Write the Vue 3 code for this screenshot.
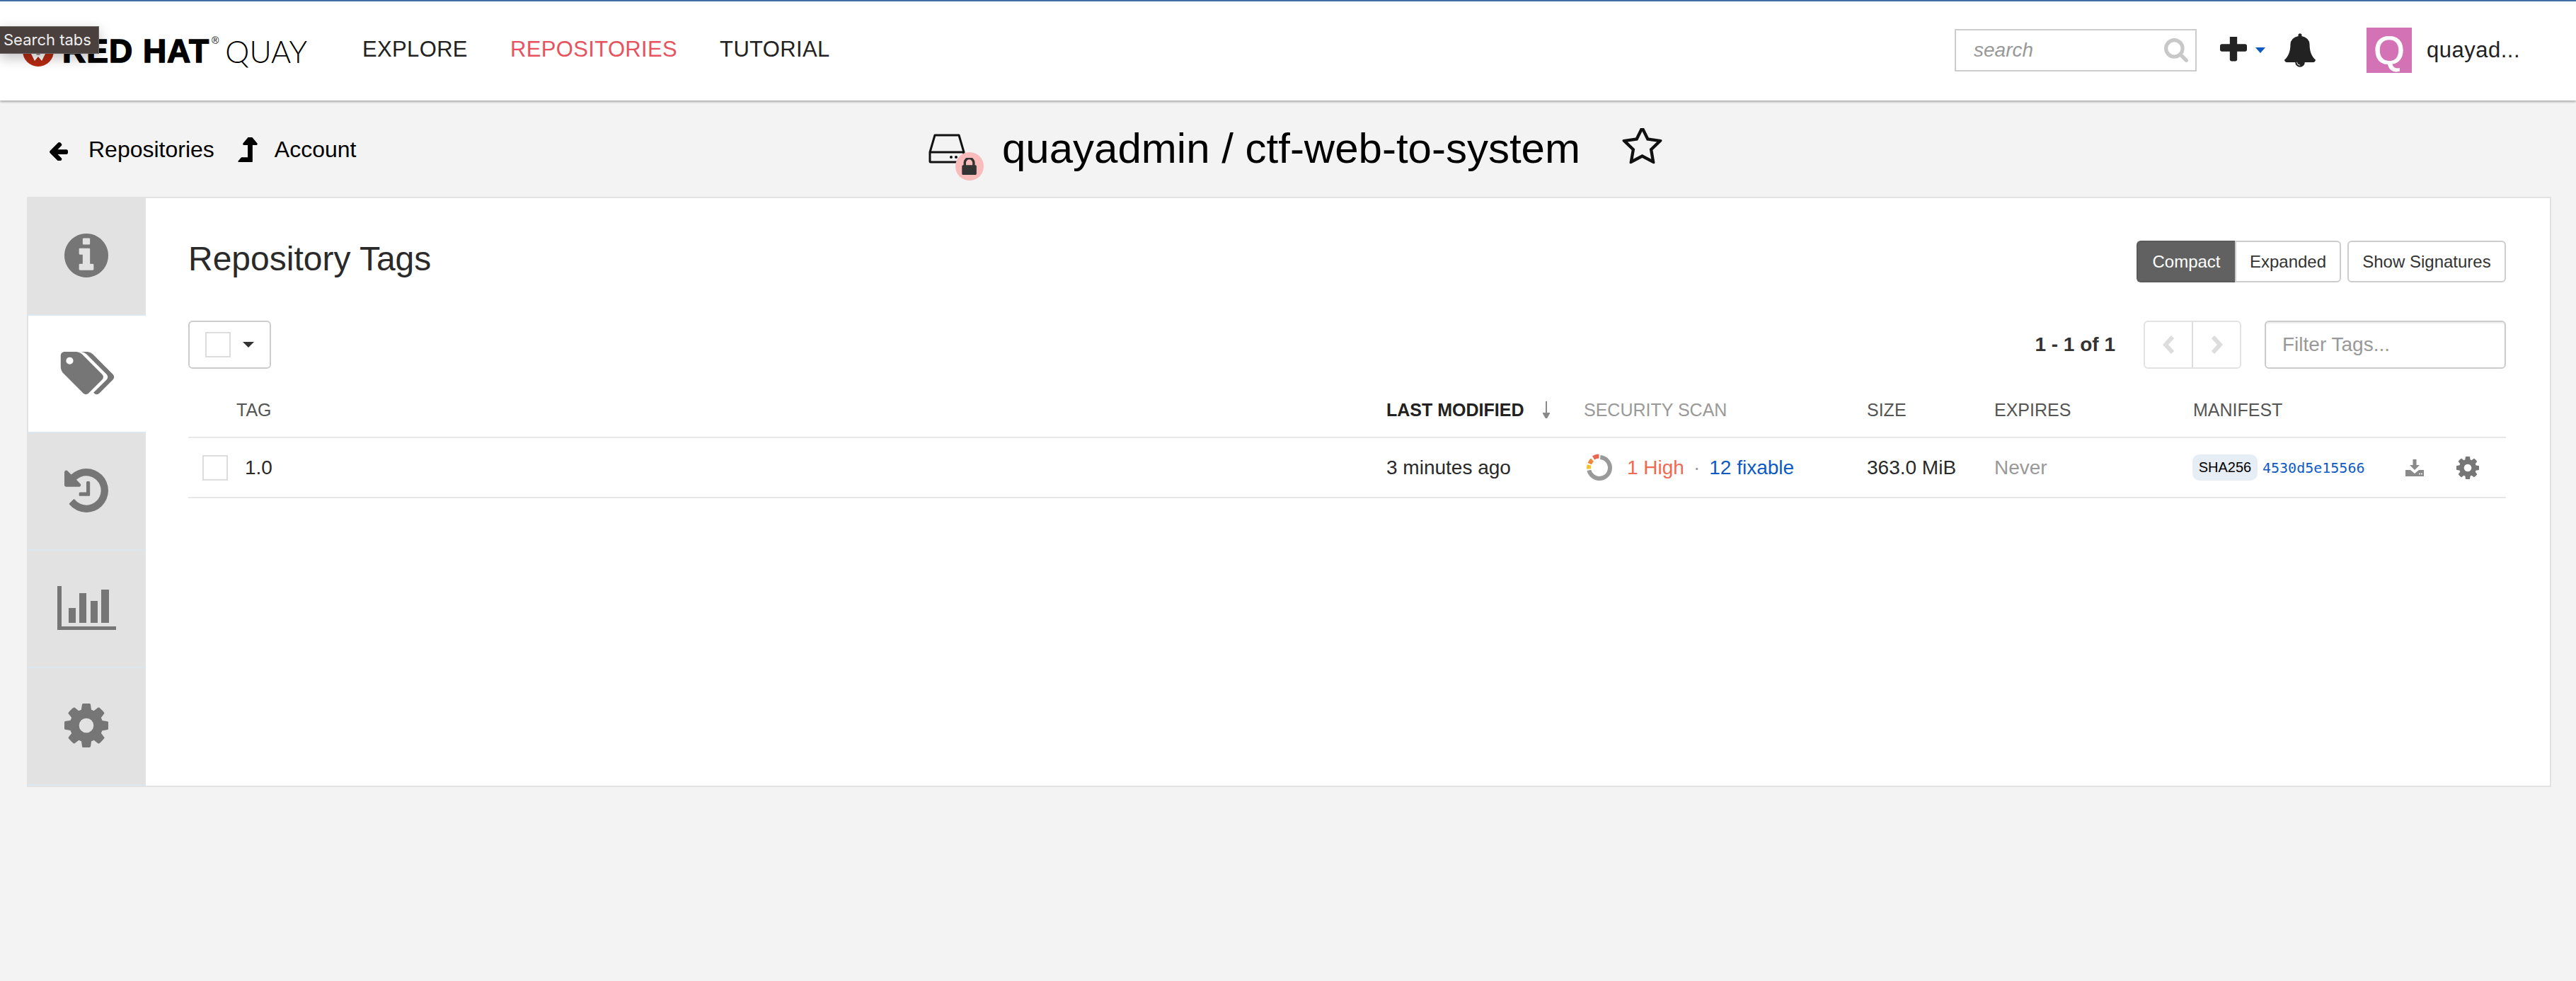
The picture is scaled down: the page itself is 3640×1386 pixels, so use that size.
<script setup>
const navItems = [
  { label: 'EXPLORE', active: false },
  { label: 'REPOSITORIES', active: true },
  { label: 'TUTORIAL', active: false },
]

const gearPath = 'M1152 896q0-106-75-181t-181-75-181 75-75 181 75 181 181 75 181-75 75-181zm512-109v222q0 12-8 23t-20 13l-185 28q-19 54-39 91 35 50 107 138 10 12 10 25t-9 23q-27 37-99 108t-94 71q-12 0-26-9l-138-108q-44 23-91 38-16 136-29 186-7 28-36 28h-222q-14 0-24.5-8.5t-11.5-21.5l-28-184q-49-16-90-37l-141 107q-10 9-25 9-14 0-25-11-126-114-165-168-7-10-7-23 0-12 8-23 15-21 51-66.5t54-70.5q-27-50-41-99l-183-27q-13-2-21-12.5t-8-23.5v-222q0-12 8-23t19-13l186-28q14-46 39-92-40-57-107-138-10-12-10-24 0-10 9-23 26-36 98.5-107.5t94.5-71.5q13 0 26 10l138 107q44-23 91-38 16-136 29-186 7-28 36-28h222q14 0 24.5 8.5t11.5 21.5l28 184q49 16 90 37l142-107q9-9 24-9 13 0 25 10 129 119 165 170 7 8 7 22 0 12-8 23-15 21-51 66.5t-54 70.5q26 50 41 98l183 28q13 2 21 12.5t8 23.5z'

// donut pieces of the scan summary, in percent of the ring
const scanSegments = [
  { color: '#9a9a9a', r: 15, len: 70, start: 0 },
  { color: '#f4c430', r: 15, len: 6, start: 72 },
  { color: '#ee8a3c', r: 15, len: 7, start: 80 },
  { color: '#e8674f', r: 16.5, len: 8, start: 90 },
]
</script>

<template>
  <div class="page">
    <header class="topbar">
      <div class="tooltip">Search tabs</div>
      <div class="logo">
        <svg class="logo-mark" viewBox="0 0 44 44">
          <circle cx="22" cy="22" r="22" fill="#b42a12" />
          <path d="M10 22 L34 22 L27 36 L22 30 L17 36 Z" fill="#fff" />
          <path d="M17 22 L27 22 L24 28 L20 28 Z" fill="#999" />
        </svg>
        <span class="logo-bold">RED HAT</span><span class="logo-reg">®</span>
        <span class="logo-light">QUAY</span>
      </div>
      <nav class="nav">
        <a v-for="item in navItems" :key="item.label" class="nav-link" :class="{ active: item.active }">{{ item.label }}</a>
      </nav>
      <div class="topbar-right">
        <div class="search">
          <span class="search-text">search</span>
          <svg class="search-icon" viewBox="64 128 1664 1664"><path fill="#c8c8c8" d="M1216 832q0-185-131.5-316.5t-316.5-131.5-316.5 131.5-131.5 316.5 131.5 316.5 316.5 131.5 316.5-131.5 131.5-316.5zm512 832q0 52-38 90t-90 38q-54 0-90-38l-343-342q-179 124-399 124-143 0-273.5-55.5t-225-150-150-225-55.5-273.5 55.5-273.5 150-225 225-150 273.5-55.5 273.5 55.5 225 150 150 225 55.5 273.5q0 220-124 399l343 343q37 37 37 90z" /></svg>
        </div>
        <svg class="plus" viewBox="192 256 1408 1408"><path fill="#222" d="M1600 736v192q0 40-28 68t-68 28h-416v416q0 40-28 68t-68 28h-192q-40 0-68-28t-28-68v-416h-416q-40 0-68-28t-28-68v-192q0-40 28-68t68-28h416v-416q0-40 28-68t68-28h192q40 0 68 28t28 68v416h416q40 0 68 28t28 68z" /></svg>
        <span class="plus-caret"></span>
        <svg class="bell" viewBox="64 0 1664 1792"><path fill="#222" d="M912 1696q0-16-16-16-59 0-101.5-42.5t-42.5-101.5q0-16-16-16t-16 16q0 73 51.5 124.5t124.5 51.5q16 0 16-16zm816-288q0 52-38 90t-90 38h-448q0 106-75 181t-181 75-181-75-75-181h-448q-52 0-90-38t-38-90q50-42 91-88t85-119.5 74.5-158.5 50-206 19.5-260q0-152 117-282.5t307-158.5q-8-19-8-39 0-40 28-68t68-28 68 28 28 68q0 20-8 39 190 28 307 158.5t117 282.5q0 139 19.5 260t50 206 74.5 158.5 85 119.5 91 88z" /></svg>
        <div class="avatar">Q</div>
        <span class="username">quayad...</span>
      </div>
    </header>

    <div class="repo-head">
      <div class="crumbs">
        <a class="crumb">
          <svg class="crumb-back" viewBox="128 128 1536 1536"><path d="M1664 896v128q0 53-32.5 90.5t-84.5 37.5h-704l293 294q38 36 38 90t-38 90l-75 76q-37 37-90 37-52 0-91-37l-651-652q-37-37-37-90 0-52 37-91l651-650q38-38 91-38 52 0 90 38l75 74q38 38 38 91t-38 91l-293 293h704q52 0 84.5 37.5t32.5 90.5z" /></svg>
          Repositories
        </a>
        <a class="crumb">
          <svg class="crumb-up" viewBox="370 128 1035 1312"><path d="M1395 508q-18 36-58 36h-192v864q0 14-9 23t-23 9h-704q-21 0-29-18-8-20 4-35l160-192q9-11 25-11h320v-640h-192q-40 0-58-36-17-37 9-68l320-384q18-22 49-22t49 22l320 384q27 32 9 68z" /></svg>
          Account
        </a>
      </div>
      <div class="repo-title">
        <div class="repo-icon">
          <svg class="drive" viewBox="0 0 52 42">
            <path d="M9 2 H43 L50 26 V39 a1 1 0 0 1 -1 1 H3 a1 1 0 0 1 -1 -1 V26 Z M2 26 H50" fill="none" stroke="#111" stroke-width="3" stroke-linejoin="round" />
            <circle cx="32" cy="33" r="2" fill="#111" />
            <circle cx="39" cy="33" r="2" fill="#111" />
          </svg>
          <span class="lock-badge">
            <svg class="lock" viewBox="192 128 1216 1344"><path fill="#333" d="M520 704h512v-192q0-106-75-181t-181-75-181 75-75 181v192zm832 96v576q0 40-28 68t-68 28h-960q-40 0-68-28t-28-68v-576q0-40 28-68t68-28h32v-192q0-184 132-316t316-132 316 132 132 316v192h32q40 0 68 28t28 68z" /></svg>
          </span>
        </div>
        <h1 class="repo-name">quayadmin / ctf-web-to-system</h1>
        <svg class="star" viewBox="64 128 1664 1600"><path fill="#111" d="M1201 1004l306-297-422-62-189-382-189 382-422 62 306 297-73 421 378-199 377 199zm527-357q0 22-26 48l-363 354 86 500q1 7 1 20 0 50-41 50-19 0-40-12l-449-236-449 236q-22 12-40 12-21 0-31.5-14.5t-10.5-35.5q0-6 2-20l86-500-364-354q-25-27-25-48 0-37 56-46l502-73 225-455q19-41 49-41t49 41l225 455 502 73q56 9 56 46z" /></svg>
      </div>
    </div>

    <main class="card">
      <aside class="rail">
        <div class="rail-tab">
          <svg class="rail-info" viewBox="128 128 1536 1536"><path d="M1152 1376v-160q0-14-9-23t-23-9h-96v-512q0-14-9-23t-23-9h-320q-14 0-23 9t-9 23v160q0 14 9 23t23 9h96v320h-96q-14 0-23 9t-9 23v160q0 14 9 23t23 9h448q14 0 23-9t9-23zm-128-896v-160q0-14-9-23t-23-9h-192q-14 0-23 9t-9 23v160q0 14 9 23t23 9h192q14 0 23-9t9-23zm640 416q0 209-103 385.5t-279.5 279.5-385.5 103-385.5-103-279.5-279.5-103-385.5 103-385.5 279.5-279.5 385.5-103 385.5 103 279.5 279.5 103 385.5z" /></svg>
        </div>
        <div class="rail-tab active">
          <svg class="rail-tags" viewBox="0 128 1900 1536"><path d="M448 448q0-53-37.5-90.5t-90.5-37.5-90.5 37.5-37.5 90.5 37.5 90.5 90.5 37.5 90.5-37.5 37.5-90.5zm1067 576q0 53-37 90l-491 492q-39 37-91 37-53 0-90-37l-715-716q-38-37-64.5-101t-26.5-117v-416q0-52 38-90t90-38h416q53 0 117 26.5t102 64.5l715 714q37 39 37 91zm384 0q0 53-37 90l-491 492q-39 37-91 37-36 0-59-14t-53-45l470-470q37-37 37-90 0-52-37-91l-715-714q-38-38-102-64.5t-117-26.5h224q53 0 117 26.5t102 64.5l715 714q37 39 37 91z" /></svg>
        </div>
        <div class="rail-tab">
          <svg class="rail-info" viewBox="128 128 1536 1536"><path d="M1664 896q0 156-61 298t-164 245-245 164-298 61q-172 0-327-72.5t-264-204.5q-7-10-6.5-22.5t8.5-20.5l137-138q10-9 25-9 16 2 23 12 73 95 179 147t225 52q104 0 198.5-40.5t163.5-109.5 109.5-163.5 40.5-198.5-40.5-198.5-109.5-163.5-163.5-109.5-198.5-40.5q-98 0-188 35.5t-160 101.5l137 138q31 30 14 69-17 40-59 40h-448q-26 0-45-19t-19-45v-448q0-42 40-59 39-17 69 14l130 129q107-101 244.5-156.5t284.5-55.5q156 0 298 61t245 164 164 245 61 298zm-640-288v448q0 14-9 23t-23 9h-320q-14 0-23-9t-9-23v-64q0-14 9-23t23-9h224v-352q0-14 9-23t23-9h64q14 0 23 9t9 23z" /></svg>
        </div>
        <div class="rail-tab">
          <svg class="rail-chart" viewBox="0 0 83 62">
            <rect x="0" y="0" width="6" height="62" />
            <rect x="0" y="57" width="83" height="5" />
            <rect x="16" y="31" width="10" height="21" />
            <rect x="31" y="10" width="10" height="42" />
            <rect x="47" y="21" width="10" height="31" />
            <rect x="62" y="5" width="11" height="47" />
          </svg>
        </div>
        <div class="rail-tab">
          <svg class="rail-info" viewBox="128 128 1536 1536"><path :d="gearPath" /></svg>
        </div>
      </aside>

      <section class="content">
        <div class="title-row">
          <h2 class="panel-title">Repository Tags</h2>
          <div class="view-btns">
            <div class="btn-group">
              <button class="btn btn-dark">Compact</button>
              <button class="btn btn-light">Expanded</button>
            </div>
            <button class="btn btn-single">Show Signatures</button>
          </div>
        </div>

        <div class="toolbar">
          <div class="select-box">
            <span class="check"></span>
            <span class="select-caret"></span>
          </div>
          <div class="toolbar-right">
            <span class="page-count">1 - 1 of 1</span>
            <div class="pager">
              <span class="pager-btn">
                <svg class="chev" viewBox="0 0 19 26"><path d="M15 2 L5 13 L15 24" /></svg>
              </span>
              <span class="pager-btn">
                <svg class="chev" viewBox="0 0 19 26"><path d="M4 2 L14 13 L4 24" /></svg>
              </span>
            </div>
            <div class="filter">Filter Tags...</div>
          </div>
        </div>

        <div class="tag-row tag-head">
          <span></span>
          <span>TAG</span>
          <span class="sorted">LAST MODIFIED
            <svg class="sort-arrow" viewBox="0 0 10 24"><path d="M5 0 V20 M1 17 L5 24 L9 17 Z" stroke="#8a8a8a" stroke-width="2" fill="#8a8a8a" /></svg>
          </span>
          <span class="muted-head">SECURITY SCAN</span>
          <span>SIZE</span>
          <span>EXPIRES</span>
          <span>MANIFEST</span>
        </div>

        <div class="tag-row tag-data">
          <span class="row-check"><span class="check"></span></span>
          <span class="tag-name">1.0</span>
          <span>3 minutes ago</span>
          <span class="scan">
            <svg class="scan-ring" viewBox="0 0 40 40">
              <circle
                v-for="seg in scanSegments"
                :key="seg.color"
                cx="20"
                cy="20"
                :r="seg.r"
                fill="none"
                :stroke="seg.color"
                stroke-width="6"
                pathLength="100"
                :stroke-dasharray="seg.len + ' ' + (100 - seg.len)"
                :stroke-dashoffset="-seg.start"
                transform="rotate(-85 20 20)"
              />
            </svg>
            <span class="scan-high">1 High</span>
            <span class="scan-dot">·</span>
            <span class="scan-fix">12 fixable</span>
          </span>
          <span>363.0 MiB</span>
          <span class="never">Never</span>
          <span class="manifest">
            <span class="sha">SHA256</span>
            <span class="hash">4530d5e15566</span>
            <svg class="dl" viewBox="0 0 26 24">
              <path d="M10.5 0 H15.5 V8 H20 L13 15 L6 8 H10.5 Z" fill="#8a8a8a" />
              <path d="M0 15 H7 L13 20 L19 15 H26 V24 H0 Z" fill="#8a8a8a" />
              <circle cx="20" cy="20.5" r="1" fill="#fff" />
              <circle cx="23" cy="20.5" r="1" fill="#fff" />
            </svg>
            <svg class="row-gear" viewBox="128 128 1536 1536"><path :d="gearPath" fill="#767676" /></svg>
          </span>
        </div>
      </section>
    </main>
  </div>
</template>

<style>
html, body {
  background: #f3f3f3;
}
</style>

<style scoped>
.page {
  min-height: 1386px;
  background: #f3f3f3;
  font-family: "Liberation Sans", Arial, sans-serif;
  color: #222;
}
.topbar {
  position: relative;
  height: 142px;
  box-sizing: border-box;
  border-top: 2px solid #3f6fa5;
  background: #fff;
  box-shadow: 0 2px 3px rgba(0, 0, 0, 0.3);
  display: flex;
  align-items: center;
}
.tooltip {
  position: absolute;
  left: 0;
  top: 35px;
  width: 140px;
  height: 39px;
  box-sizing: border-box;
  background: #4a403e;
  border: 1px solid #6a6462;
  border-left: 0;
  box-shadow: 0 6px 18px rgba(0, 0, 0, 0.25);
  color: #eee;
  font-family: Inter, sans-serif;
  font-size: 22px;
  line-height: 37px;
  padding-left: 5px;
  white-space: nowrap;
  z-index: 5;
}
.logo {
  width: 480px;
  margin-left: 32px;
  flex: none;
  display: flex;
  align-items: center;
  color: #000;
}
.logo-mark {
  width: 44px;
  height: 44px;
  margin-right: 12px;
  flex: none;
}
.logo-bold {
  font-size: 46px;
  font-weight: 700;
  -webkit-text-stroke: 1.5px #000;
  letter-spacing: 1px;
}
.logo-reg {
  font-size: 14px;
  align-self: flex-start;
  margin: 4px 0 0 3px;
}
.logo-light {
  font-family: Lato, sans-serif;
  font-weight: 300;
  font-size: 43px;
  margin-left: 9px;
}
.nav {
  display: flex;
  gap: 60px;
  font-size: 31px;
  letter-spacing: 0.35px;
  margin-top: -4px;
}
.nav-link {
  color: #222;
}
.nav-link.active {
  color: #e6535f;
}
.topbar-right {
  margin-left: auto;
  margin-right: 78px;
  display: flex;
  align-items: center;
  margin-top: -2px;
}
.search {
  width: 342px;
  height: 60px;
  box-sizing: border-box;
  border: 2px solid #ccc;
  display: flex;
  align-items: center;
  justify-content: space-between;
  padding: 0 10px 0 25px;
}
.search-text {
  font-size: 28px;
  font-style: italic;
  color: #999;
}
.search-icon {
  width: 34px;
  height: 34px;
}
.plus {
  width: 38px;
  height: 38px;
  margin-left: 33px;
}
.plus-caret {
  width: 0;
  height: 0;
  margin-left: 12px;
  border-left: 7.5px solid transparent;
  border-right: 7.5px solid transparent;
  border-top: 8px solid #0d5ac5;
}
.bell {
  width: 44px;
  height: 48px;
  margin-left: 27px;
}
.avatar {
  width: 64px;
  height: 64px;
  margin-left: 72px;
  background: #d372b5;
  color: #fff;
  font-size: 56px;
  line-height: 64px;
  text-align: center;
  -webkit-text-stroke: 1px #fff;
}
.username {
  width: 133px;
  font-size: 31px;
  margin-left: 21px;
  letter-spacing: 0.5px;
  white-space: nowrap;
}

.repo-head {
  height: 136px;
  display: flex;
  align-items: center;
  padding-left: 69px;
}
.crumbs {
  width: 1243px;
  flex: none;
  display: flex;
  gap: 33px;
  font-size: 32px;
  color: #000;
  margin-top: 3px;
}
.crumb {
  display: flex;
  align-items: center;
}
.crumb-back {
  width: 27px;
  height: 27px;
  margin-right: 29px;
  margin-top: 4px;
}
.crumb-up {
  width: 28px;
  height: 35px;
  margin-right: 24px;
}
.repo-title {
  display: flex;
  align-items: center;
}
.repo-icon {
  position: relative;
  width: 52px;
  height: 42px;
  flex: none;
}
.drive {
  display: block;
  width: 52px;
  height: 42px;
}
.lock-badge {
  position: absolute;
  left: 38px;
  top: 26px;
  width: 40px;
  height: 40px;
  border-radius: 50%;
  background: #f9bcbb;
  display: flex;
  align-items: center;
  justify-content: center;
}
.lock {
  width: 22px;
  height: 24px;
}
.repo-name {
  margin: 0 0 0 52px;
  font-size: 60px;
  font-weight: 400;
  line-height: 1.1;
  color: #000;
  white-space: nowrap;
}
.star {
  width: 57px;
  height: 54px;
  margin-left: 59px;
  margin-top: -4px;
}

.card {
  margin: 0 35px 0 38px;
  height: 834px;
  box-sizing: border-box;
  border: 2px solid #e2e2e2;
  background: #fff;
  display: flex;
}
.rail {
  width: 168px;
  flex: none;
  margin: -2px 0 -2px -2px;
  padding-top: 2px;
  box-sizing: border-box;
  background: #e2e2e2;
}
.rail-tab {
  height: 166px;
  box-sizing: border-box;
  border-bottom: 2px solid #dbe6ee;
  padding-bottom: 2px;
  display: flex;
  align-items: center;
  justify-content: center;
  fill: #767676;
}
.rail-tab.active {
  background: #fff;
  margin-left: 2px;
}
.rail-info {
  width: 62px;
  height: 62px;
}
.rail-tags {
  width: 77px;
  height: 61px;
}
.rail-chart {
  width: 83px;
  height: 62px;
}
.content {
  flex: 1;
  min-width: 0;
  padding: 60px 62px 0 60px;
}
.title-row {
  display: flex;
  align-items: center;
  justify-content: space-between;
  height: 59px;
}
.panel-title {
  margin: -8px 0 0 0;
  font-size: 48px;
  font-weight: 400;
  color: #2a2a2a;
}
.view-btns {
  display: flex;
  gap: 9px;
}
.btn-group {
  display: flex;
}
.btn {
  height: 59px;
  box-sizing: border-box;
  border: 2px solid #ccc;
  background: #fff;
  color: #333;
  font-family: inherit;
  font-size: 24px;
  padding: 0;
  margin: 0;
  white-space: nowrap;
}
.btn-group .btn:first-child {
  border-radius: 6px 0 0 6px;
  border-right: 0;
}
.btn-group .btn:last-child {
  border-radius: 0 6px 6px 0;
}
.btn-dark {
  background: #616161;
  border-color: #5a5a5a;
  color: #fff;
  width: 139px;
}
.btn-light {
  width: 150px;
}
.btn-single {
  width: 224px;
  border-radius: 6px;
}
.toolbar {
  margin-top: 54px;
  height: 68px;
  display: flex;
  align-items: center;
  justify-content: space-between;
}
.select-box {
  width: 117px;
  height: 68px;
  box-sizing: border-box;
  border: 2px solid #ccc;
  border-radius: 6px;
  display: flex;
  align-items: center;
  padding-left: 22px;
  gap: 17px;
}
.check {
  display: block;
  width: 36px;
  height: 36px;
  box-sizing: border-box;
  border: 2px solid #ddd;
  background: #fff;
}
.select-caret {
  width: 0;
  height: 0;
  border-left: 8px solid transparent;
  border-right: 8px solid transparent;
  border-top: 8px solid #333;
}
.toolbar-right {
  display: flex;
  align-items: center;
}
.page-count {
  font-size: 28px;
  font-weight: 700;
  color: #333;
}
.pager {
  margin-left: 40px;
  width: 138px;
  height: 68px;
  box-sizing: border-box;
  border: 2px solid #e2e2e2;
  border-radius: 6px;
  display: flex;
}
.pager-btn {
  flex: 1;
  display: flex;
  align-items: center;
  justify-content: center;
}
.pager-btn + .pager-btn {
  border-left: 2px solid #ddd;
}
.chev {
  width: 19px;
  height: 26px;
  fill: none;
  stroke: #ddd;
  stroke-width: 6;
}
.filter {
  margin-left: 33px;
  width: 341px;
  height: 68px;
  box-sizing: border-box;
  border: 2px solid #ccc;
  border-radius: 6px;
  box-shadow: inset 0 2px 2px rgba(0, 0, 0, 0.08);
  padding-left: 23px;
  font-size: 28px;
  line-height: 64px;
  color: #999;
}
.tag-row {
  display: grid;
  grid-template-columns: 68px 1625px 279px 400px 180px 281px 1fr;
  align-items: center;
  border-bottom: 2px solid #e8e8e8;
  box-sizing: border-box;
}
.tag-head {
  height: 98px;
  padding-top: 20px;
  font-size: 25px;
  color: #555;
}
.sorted {
  font-weight: 700;
  color: #222;
  display: flex;
  align-items: center;
  gap: 27px;
}
.sort-arrow {
  width: 10px;
  height: 24px;
}
.muted-head {
  color: #999;
}
.tag-data {
  height: 85px;
  font-size: 28px;
  color: #2a2a2a;
}
.row-check {
  padding-left: 20px;
}
.tag-name {
  padding-left: 12px;
}
.scan {
  display: flex;
  align-items: center;
}
.scan-ring {
  width: 40px;
  height: 40px;
  margin-left: 2px;
  flex: none;
}
.scan-high {
  margin-left: 19px;
  color: #ee6a52;
}
.scan-dot {
  margin: 0 13px;
  color: #999;
}
.scan-fix {
  color: #0d5ac5;
}
.never {
  color: #999;
}
.manifest {
  display: flex;
  align-items: center;
  margin-left: -1px;
}
.sha {
  width: 92px;
  height: 37px;
  box-sizing: border-box;
  border-radius: 10px;
  background: #e6edf4;
  color: #000;
  font-size: 20px;
  line-height: 37px;
  text-align: center;
}
.hash {
  margin-left: 7px;
  font-family: "DejaVu Sans Mono", monospace;
  font-size: 20px;
  color: #0d5ac5;
}
.dl {
  width: 26px;
  height: 24px;
  margin-left: 57px;
}
.row-gear {
  width: 32px;
  height: 32px;
  margin-left: 46px;
}
</style>
